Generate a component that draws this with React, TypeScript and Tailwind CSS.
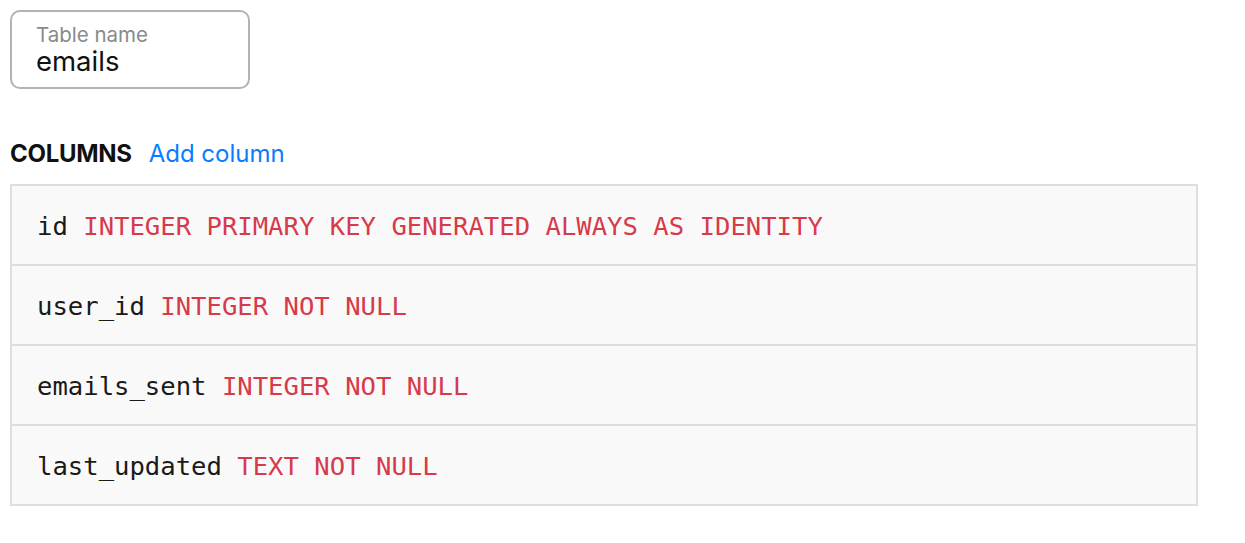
const columns = [
  { name: "id", type: "INTEGER PRIMARY KEY GENERATED ALWAYS AS IDENTITY" },
  { name: "user_id", type: "INTEGER NOT NULL" },
  { name: "emails_sent", type: "INTEGER NOT NULL" },
  { name: "last_updated", type: "TEXT NOT NULL" },
];

export default function App() {
  return (
    <div className="bg-white min-h-screen p-[10px] font-['Inter',sans-serif]">
      <div className="w-[240px] h-[79px] border-2 border-[#b3b3b3] rounded-[10px] pl-[24px] pt-[12px] flex flex-col">
        <span className="text-[20.5px] leading-[22px] text-[#8a8a8a]">Table name</span>
        <span className="text-[27.5px] leading-[30px] text-[#111]">emails</span>
      </div>

      <div className="mt-[50px] flex items-baseline gap-[17px] leading-[30px]">
        <span className="text-[24px] font-bold text-[#111] tracking-[-0.3px]">COLUMNS</span>
        <a href="#" className="text-[24px] text-[#0a7cff]">Add column</a>
      </div>

      <div className="mt-[15px] w-[1188px] border-2 border-[#dedede] bg-[#f9f9f9]">
        {columns.map((col, i) => (
          <div
            key={col.name}
            className={
              "flex items-center pl-[25px] pt-[2px] font-['DejaVu_Sans_Mono',monospace] text-[25.6px] " +
              (i > 0 ? "border-t-2 border-[#dedede] h-[80px]" : "h-[78px]")
            }
          >
            <span className="text-[#1a1a1a]">{col.name}</span>
            <span className="text-[#d73a4a] ml-[15.4px]">{col.type}</span>
          </div>
        ))}
      </div>
    </div>
  );
}
